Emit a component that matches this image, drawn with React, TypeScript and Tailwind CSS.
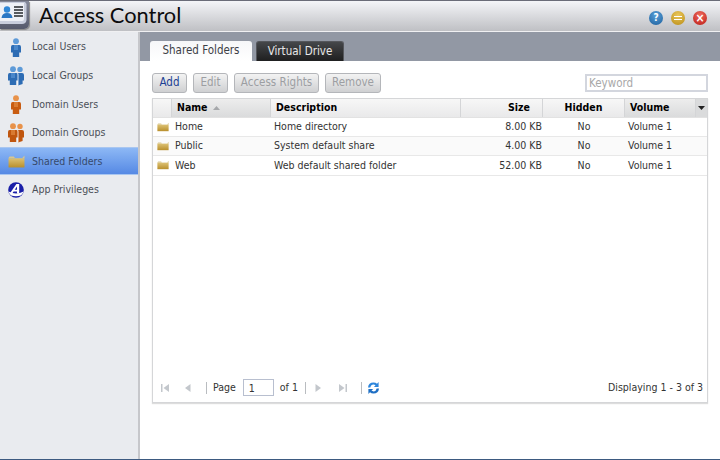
const FONT = "font-['DejaVu_Sans_Condensed','DejaVu_Sans',sans-serif]";

function Person({ x = 0, color, dark }: { x?: number; color: string; dark: string }) {
  return (
    <g transform={`translate(${x} 0)`}>
      <circle cx="5" cy="3.2" r="2.9" fill={color} />
      <path d="M1.6 7 H8.4 Q10 7 10 9 V14.5 H8.2 V19 H1.8 V14.5 H0 V9 Q0 7 1.6 7Z" fill={dark} />
      <path d="M3 7 H7 V12 H3Z" fill={color} opacity="0.6" />
    </g>
  );
}

function UserIcon({ color, dark }: { color: string; dark: string }) {
  return (
    <svg width="10" height="19" viewBox="0 0 10 19">
      <Person color={color} dark={dark} />
    </svg>
  );
}

function GroupIcon({ color, dark }: { color: string; dark: string }) {
  return (
    <svg width="16" height="20" viewBox="0 0 16 20">
      <circle cx="12" cy="3.4" r="2.7" fill={color} />
      <path d="M10.5 7 H14 Q16 7 16 9 V14.5 H14.6 V18 L10 19.5 V7Z" fill={dark} />
      <Person color={color} dark={dark} />
      <path d="M10 7.5 V19.5" stroke="#fff" strokeWidth="0.8" />
    </svg>
  );
}

function FolderIcon({ w, h }: { w: number; h: number }) {
  return (
    <svg width={w} height={h} viewBox="0 0 16 12">
      <defs>
        <linearGradient id="folderBody" x1="0" y1="0" x2="0" y2="1">
          <stop offset="0" stopColor="#dcc173" />
          <stop offset="1" stopColor="#b98f2c" />
        </linearGradient>
      </defs>
      <path d="M0.5 2.6 L1.5 1.4 H5.5 L6.5 2.6 H13.5 L15.5 0.4 V3 H0.5 Z" fill="#d9c78f" />
      <path d="M0.5 3 H15.5 V11.6 H0.5 Z" fill="url(#folderBody)" />
    </svg>
  );
}

function AppIcon() {
  return (
    <svg width="16" height="16" viewBox="0 0 16 16">
      <circle cx="8" cy="8" r="7.8" fill="#1a1fa8" />
      <path d="M0.4 9.6 Q8 13.4 15.6 9.6 Q14.8 12 12.8 13.4 Q8 15 3.2 13.4 Q1.2 12 0.4 9.6Z" fill="#fff" />
      <path d="M8.4 2 H11.2 V11.5 H9 V9.4 H5.6 L4.2 11.5 H1.8 Z M9 7.7 V4.6 L6.7 7.7 Z" fill="#fff" fillRule="evenodd" />
    </svg>
  );
}

function SideItem({ icon, label, active }: { icon: React.ReactNode; label: string; active?: boolean }) {
  return (
    <div
      className={`flex items-center ${
        active ? 'h-[28px] border-y border-[#a9c6f0] bg-gradient-to-b from-[#8db8f5] to-[#5689e4]' : 'h-[28.6px]'
      }`}
    >
      <div className="flex w-[32px] shrink-0 justify-center">{icon}</div>
      <span className={`text-[10.5px] ${active ? 'text-[#36496b]' : 'text-[#4b4f57]'}`}>{label}</span>
    </div>
  );
}

function ToolButton({ label, primary, width }: { label: string; primary?: boolean; width: string }) {
  return (
    <button
      className={`flex h-[20px] ${width} items-center justify-center rounded-[3px] border border-[#b4b6ba] bg-gradient-to-b from-[#f3f3f3] to-[#cfd0d2] text-[11.5px] ${
        primary ? 'text-[#1c3f94]' : 'text-[#9c9ea2]'
      }`}
    >
      {label}
    </button>
  );
}

function HeadCell({ width, active, children }: { width: string; active?: boolean; children?: React.ReactNode }) {
  return (
    <div
      className={`flex h-full shrink-0 items-center border-r border-[#d4d5d7] text-[10.5px] font-bold text-black ${width} ${
        active ? 'bg-gradient-to-b from-[#ededed] to-[#dadbdc]' : ''
      }`}
    >
      {children}
    </div>
  );
}

const rows = [
  { name: 'Home', desc: 'Home directory', size: '8.00 KB' },
  { name: 'Public', desc: 'System default share', size: '4.00 KB' },
  { name: 'Web', desc: 'Web default shared folder', size: '52.00 KB' },
];

function PagerIcon({ d }: { d: string }) {
  return (
    <svg width="12" height="12" viewBox="0 0 12 12">
      <path d={d} fill="#c3c7cc" />
    </svg>
  );
}

export default function App() {
  return (
    <div className={`flex h-[460px] w-[720px] flex-col overflow-hidden bg-white ${FONT}`}>
      <header className="flex h-[32px] shrink-0 items-center border-y border-t-[#6a6c78] border-b-[#f0f0f2] bg-gradient-to-b from-[#f4f5f8] to-[#bfc0c4]">
        <div className="h-[28px] w-[29px] shrink-0 self-start overflow-hidden rounded-br-[5px] bg-gradient-to-b from-[#85899a] to-[#565a6c] shadow-[1px_1px_1px_#888]">
          <svg width="29" height="28" viewBox="0 0 29 28">
            <path d="M0 1 H25 L26.5 3 V19 Q26 23 22 23 H0Z" fill="#c9cedd" />
            <path d="M0 2 H24 V18 Q24 20 22 20 H0Z" fill="#eef0f6" />
            <circle cx="7" cy="8.5" r="3.2" fill="#2f86d6" />
            <path d="M1.5 17 Q2 12 7 12 Q12 12 12.5 17Z" fill="#2a76c4" />
            <path d="M14 6H23M14 9H23M14 12H23M14 15H23" stroke="#26282e" strokeWidth="1.4" />
          </svg>
        </div>
        <h1 className="mb-[2px] ml-[10px] font-['Lato',sans-serif] text-[21.8px] leading-none text-[#0c0c0e]">Access Control</h1>
        <div className="ml-auto mr-[13px] mt-[4px] flex items-center gap-[8px]">
          <span className="flex h-[14px] w-[14px] items-center justify-center rounded-full bg-[radial-gradient(circle_at_50%_30%,#5aa0d8,#1c5f9d)] text-[10px] font-bold leading-none text-white">?</span>
          <span className="flex h-[14px] w-[14px] items-center justify-center rounded-full bg-[radial-gradient(circle_at_50%_30%,#eac65a,#b98d18)]">
            <span className="h-[4px] w-[8px] border-y border-white" />
          </span>
          <span className="flex h-[14px] w-[14px] items-center justify-center rounded-full bg-[radial-gradient(circle_at_50%_30%,#ee6a5c,#bb1d18)] text-[12px] font-bold leading-none text-white">×</span>
        </div>
      </header>

      <div className="flex min-h-0 flex-1">
        <aside className="w-[140px] shrink-0 border-r-2 border-[#c6c7cb] bg-[#e9ebef] pt-px">
          <SideItem icon={<UserIcon color="#5d9ad8" dark="#2d6cb4" />} label="Local Users" />
          <SideItem icon={<GroupIcon color="#5d9ad8" dark="#2d6cb4" />} label="Local Groups" />
          <SideItem icon={<UserIcon color="#e8924a" dark="#c85c12" />} label="Domain Users" />
          <SideItem icon={<GroupIcon color="#e8924a" dark="#c0560f" />} label="Domain Groups" />
          <SideItem active icon={<FolderIcon w={17} h={13} />} label="Shared Folders" />
          <SideItem icon={<AppIcon />} label="App Privileges" />
        </aside>

        <main className="flex min-w-0 flex-1 flex-col">
          <div className="flex h-[29px] shrink-0 items-end gap-[4px] bg-[#9298a4] pl-[10px]">
            <div className="flex h-[20px] w-[102px] items-center justify-center rounded-t-[3px] bg-gradient-to-b from-[#f6f7f9] to-white text-[11.5px] text-[#3c4046]">Shared Folders</div>
            <div className="flex h-[20px] w-[88px] items-center justify-center rounded-t-[3px] border border-b-0 border-[#55575c] bg-gradient-to-b from-[#45474a] to-[#1f1f20] text-[11.5px] text-[#e8e8e8]">Virtual Drive</div>
          </div>

          <div className="flex flex-1 flex-col px-[12px] pb-[56px] pt-[12px]">
            <div className="flex h-[20px] shrink-0 items-center gap-[6px]">
              <ToolButton label="Add" primary width="w-[35px]" />
              <ToolButton label="Edit" width="w-[35px]" />
              <ToolButton label="Access Rights" width="w-[85px]" />
              <ToolButton label="Remove" width="w-[56px]" />
              <input
                placeholder="Keyword"
                className="ml-auto h-[18px] w-[123px] border-2 border-[#d3d6de] bg-white px-[2px] text-[11.5px] placeholder:text-[#a8a8a8]"
              />
            </div>

            <div className="mt-[5px] flex min-h-0 flex-1 flex-col border border-[#d5d6d8] shadow-[0_1px_1px_#ddd]">
              <div className="flex h-[19px] shrink-0 border-b border-[#e2e2e2] bg-gradient-to-b from-[#f7f7f7] to-[#e9e9ea]">
                <HeadCell width="w-[19px]" />
                <HeadCell width="w-[99px]" active>
                  <span className="pl-[5px]">Name</span>
                  <svg className="ml-[5px]" width="7" height="4" viewBox="0 0 7 4"><path d="M3.5 0 L7 4 H0Z" fill="#a6a8ab" /></svg>
                </HeadCell>
                <HeadCell width="w-[190px]"><span className="pl-[5px]">Description</span></HeadCell>
                <HeadCell width="w-[82px] justify-end"><span className="pr-[12px]">Size</span></HeadCell>
                <HeadCell width="w-[82px] justify-center">Hidden</HeadCell>
                <HeadCell width="w-[71px]" active><span className="pl-[5px]">Volume</span></HeadCell>
                <div className="flex flex-1 items-center justify-center bg-[#dadbdc]">
                  <svg width="7" height="4" viewBox="0 0 7 4"><path d="M0 0 H7 L3.5 4Z" fill="#222" /></svg>
                </div>
              </div>

              <div className="flex-1">
                {rows.map((row, i) => (
                  <div key={row.name} className={`flex h-[19.2px] items-center border-b border-[#e8e8e8] text-[10.5px] text-[#333] ${i === 1 ? 'bg-[#fafafa]' : 'bg-white'}`}>
                    <div className="flex w-[19px] shrink-0 justify-center"><FolderIcon w={12} h={10} /></div>
                    <div className="w-[99px] shrink-0 pl-[3px]">{row.name}</div>
                    <div className="w-[190px] shrink-0 pl-[3px]">{row.desc}</div>
                    <div className="w-[82px] shrink-0 pr-[1px] text-right">{row.size}</div>
                    <div className="w-[82px] shrink-0 text-center">No</div>
                    <div className="shrink-0 pl-[3px]">Volume 1</div>
                  </div>
                ))}
              </div>

              <div className="flex h-[31px] shrink-0 items-center pl-[6px] pr-[4px] pt-[2px] text-[10.5px] text-[#333]">
                <PagerIcon d="M2 2 H3.5 V10 H2Z M10 2 V10 L4.5 6Z" />
                <span className="w-[11px]" />
                <PagerIcon d="M8.5 2 V10 L3 6Z" />
                <span className="ml-[12px] h-[12px] w-px bg-[#b9bcc0]" />
                <span className="ml-[6px]">Page</span>
                <input
                  defaultValue="1"
                  className="ml-[7px] h-[17px] w-[31px] border border-[#b8bfcf] px-[5px] text-[10.5px] text-[#333]"
                />
                <span className="ml-[6px]">of 1</span>
                <span className="ml-[7px] h-[12px] w-px bg-[#b9bcc0]" />
                <span className="w-[6px]" />
                <PagerIcon d="M3.5 2 V10 L9 6Z" />
                <span className="w-[13px]" />
                <PagerIcon d="M2 2 V10 L7.5 6Z M8.5 2 H10 V10 H8.5Z" />
                <span className="ml-[12px] h-[12px] w-px bg-[#b9bcc0]" />
                <svg className="ml-[5px]" width="13" height="14" viewBox="0 0 13 14">
                  <path d="M1 6.5 Q1.5 1.5 6.5 1.5 Q8.8 1.5 10 2.8 L11.6 1 V6 H6.8 L8.5 4.4 Q7.6 3.6 6.4 3.6 Q4 3.6 3.3 6.5Z" fill="#2e86dc" />
                  <path d="M12 7.5 Q11.5 12.5 6.5 12.5 Q4.2 12.5 3 11.2 L1.4 13 V8 H6.2 L4.5 9.6 Q5.4 10.4 6.6 10.4 Q9 10.4 9.7 7.5Z" fill="#1f6fc4" />
                </svg>
                <span className="ml-auto">Displaying 1 - 3 of 3</span>
              </div>
            </div>
          </div>
        </main>
      </div>
      <div className="h-px shrink-0 bg-[#3d5a80]" />
    </div>
  );
}
